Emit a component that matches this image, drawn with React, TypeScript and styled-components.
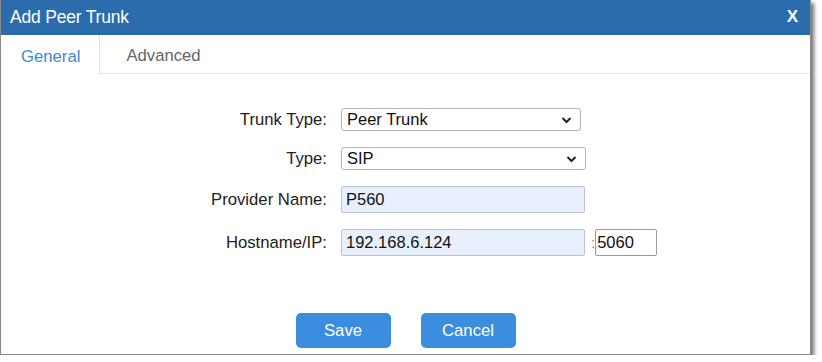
import React from 'react';
import styled, { createGlobalStyle } from 'styled-components';

const GlobalStyle = createGlobalStyle`
  html, body {
    margin: 0;
    padding: 0;
    background: #ffffff;
    font-family: "Liberation Sans", Arial, sans-serif;
  }
`;

const Dialog = styled.div`
  width: 809px;
  height: 354px;
  background: #ffffff;
  border: 1px solid #8a8a8a;
  border-top: none;
  box-shadow: 3px 3px 4px rgba(0, 0, 0, 0.55);
  display: flex;
  flex-direction: column;
`;

const Header = styled.div`
  height: 35px;
  background: #2b6dac;
  color: #ffffff;
  display: flex;
  align-items: center;
  justify-content: space-between;
  padding: 0 12px 1px 9px;
  box-sizing: border-box;
  font-size: 17.5px;
  letter-spacing: -0.2px;
`;

const Close = styled.span`
  font-weight: bold;
  font-size: 17px;
`;

const TabBar = styled.div`
  height: 39px;
  display: flex;
  border-bottom: 1px solid #e4e4e4;
  box-sizing: border-box;
`;

const Tab = styled.div<{ $active?: boolean }>`
  display: flex;
  align-items: center;
  padding: 4px ${p => (p.$active ? '19px' : '26px')} 0 ${p => (p.$active ? '20px' : '26px')};
  font-size: 16.7px;
  color: ${p => (p.$active ? '#3a8ad8' : '#666666')};
  background: #ffffff;
  border-right: ${p => (p.$active ? '1px solid #e4e4e4' : 'none')};
  margin-bottom: ${p => (p.$active ? '-1px' : '0')};
`;

const Form = styled.div`
  display: grid;
  grid-template-columns: 326px auto;
  column-gap: 14px;
  row-gap: 16px;
  align-items: center;
  padding-top: 34px;
`;

const Label = styled.label`
  text-align: right;
  font-size: 16.7px;
  color: #222222;
`;

const SelectBox = styled.div<{ $width: number }>`
  width: ${p => p.$width}px;
  height: 23px;
  box-sizing: border-box;
  border: 1px solid #b4b4b4;
  border-radius: 3px;
  display: flex;
  align-items: center;
  justify-content: space-between;
  padding: 0 8px 0 5px;
  font-size: 16.5px;
  color: #111111;
  background: #ffffff;
`;

const Field = styled.div`
  display: flex;
  align-items: center;
`;

const TextInput = styled.input<{ $width: number; $filled?: boolean }>`
  width: ${p => p.$width}px;
  height: 27px;
  box-sizing: border-box;
  border: 1px solid ${p => (p.$filled ? '#b9c4d2' : '#9a9a9a')};
  border-radius: 2px;
  background: ${p => (p.$filled ? '#e8f0fe' : '#ffffff')};
  font-family: "Liberation Sans", Arial, sans-serif;
  font-size: 16.5px;
  color: #111111;
  padding: 0 4px;
  outline: none;
`;

const PortInput = styled(TextInput)`
  padding: 0 1px;
`;

const Colon = styled.span`
  font-size: 15px;
  color: #888888;
  margin: 0 0 0 6px;
`;

const Buttons = styled.div`
  display: flex;
  justify-content: center;
  gap: 30px;
  margin-top: 57px;
`;

const Button = styled.button`
  width: 95px;
  height: 35px;
  border: none;
  border-radius: 5px;
  background: #3b8ddf;
  color: #ffffff;
  font-family: "Liberation Sans", Arial, sans-serif;
  font-size: 16.7px;
`;

const Chevron = () => (
  <svg width="11" height="8" viewBox="0 0 11 8">
    <path d="M1.5 2 L5.5 6 L9.5 2" stroke="#222" strokeWidth="2" fill="none" />
  </svg>
);

const App: React.FC = () => {
  return (
    <>
      <GlobalStyle />
      <Dialog>
        <Header>
          <span>Add Peer Trunk</span>
          <Close>X</Close>
        </Header>
        <TabBar>
          <Tab $active>General</Tab>
          <Tab>Advanced</Tab>
        </TabBar>
        <Form>
          <Label>Trunk Type:</Label>
          <SelectBox $width={240}>
            <span>Peer Trunk</span>
            <Chevron />
          </SelectBox>
          <Label>Type:</Label>
          <SelectBox $width={245}>
            <span>SIP</span>
            <Chevron />
          </SelectBox>
          <Label>Provider Name:</Label>
          <Field>
            <TextInput $width={244} $filled defaultValue="P560" />
          </Field>
          <Label>Hostname/IP:</Label>
          <Field>
            <TextInput $width={244} $filled defaultValue="192.168.6.124" />
            <Colon>:</Colon>
            <PortInput $width={62} defaultValue="5060" />
          </Field>
        </Form>
        <Buttons>
          <Button>Save</Button>
          <Button>Cancel</Button>
        </Buttons>
      </Dialog>
    </>
  );
};

export default App;
